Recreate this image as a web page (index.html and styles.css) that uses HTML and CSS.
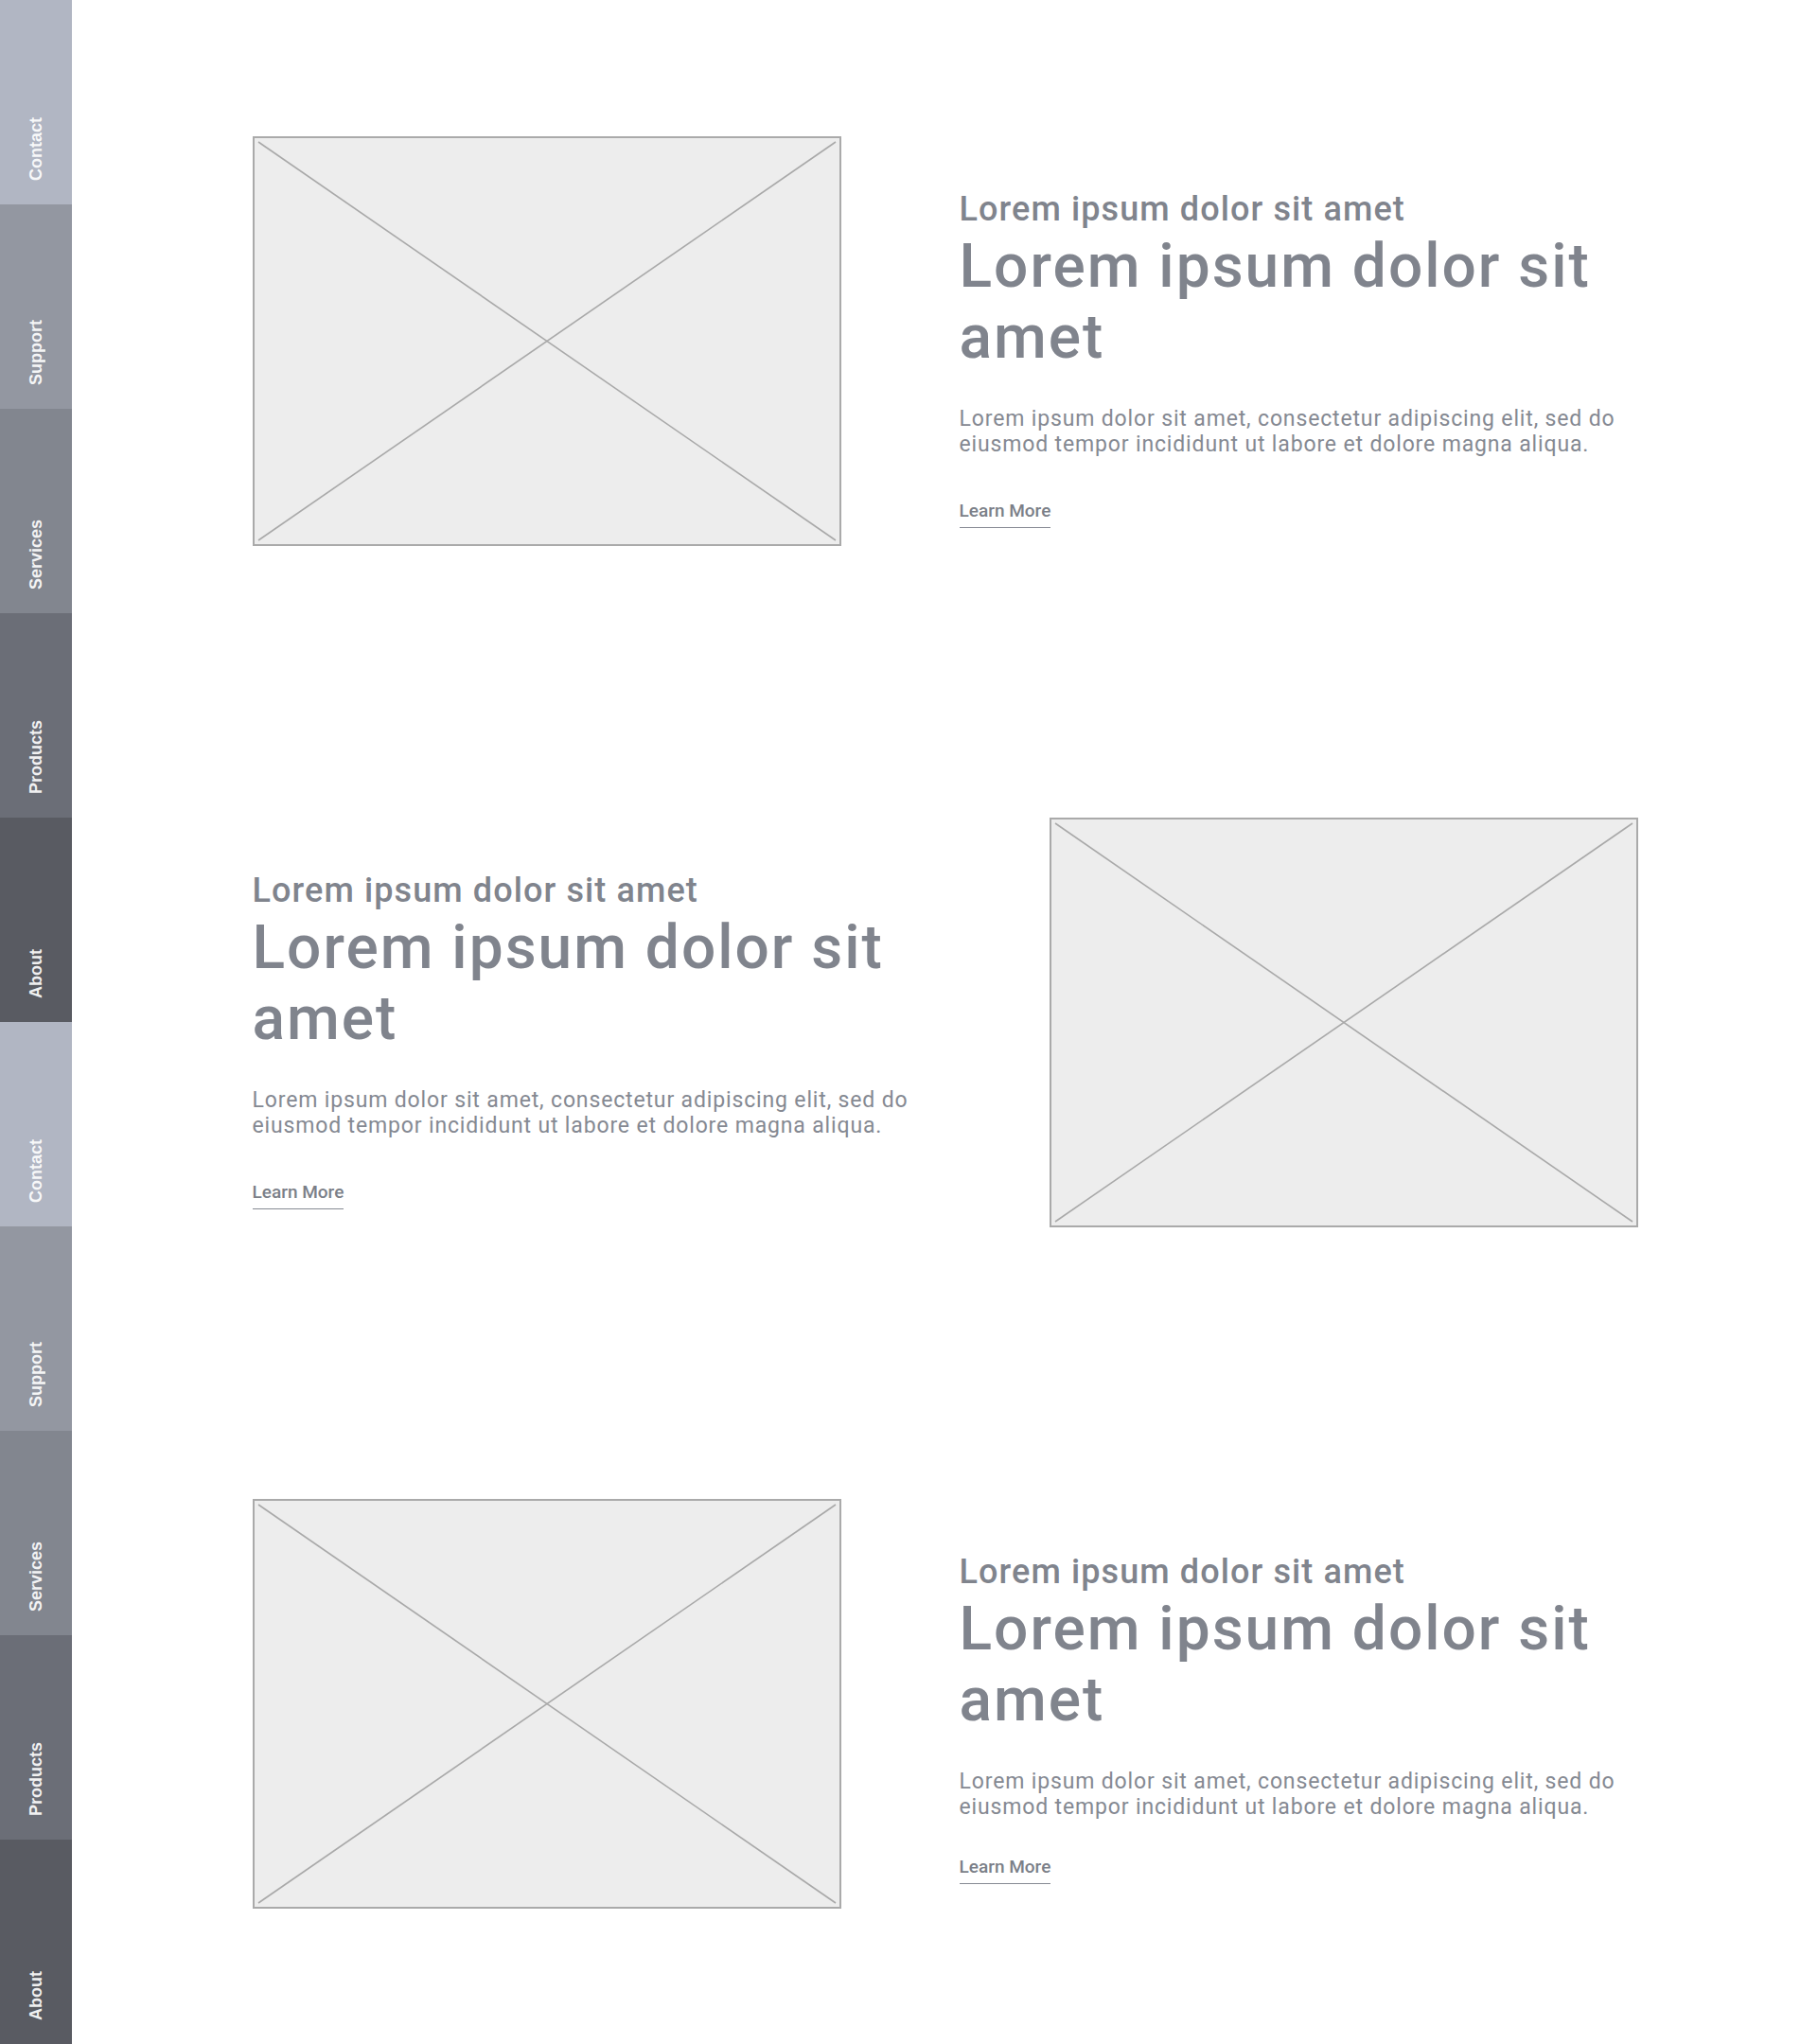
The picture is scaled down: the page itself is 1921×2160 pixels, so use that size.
FILE: index.html
```html
<!DOCTYPE html>
<html lang="en">
<head>
<meta charset="utf-8">
<title>Wireframe</title>
<link rel="stylesheet" href="styles.css">
</head>
<body>
<div class="page">
  <nav class="sidebar">
    <a class="tab tab-1"><span>Contact</span></a>
    <a class="tab tab-2"><span>Support</span></a>
    <a class="tab tab-3"><span>Services</span></a>
    <a class="tab tab-4"><span>Products</span></a>
    <a class="tab tab-5"><span>About</span></a>
    <a class="tab tab-1"><span>Contact</span></a>
    <a class="tab tab-2"><span>Support</span></a>
    <a class="tab tab-3"><span>Services</span></a>
    <a class="tab tab-4"><span>Products</span></a>
    <a class="tab tab-5"><span>About</span></a>
  </nav>
  <main class="main">
    <section class="row">
      <div class="placeholder">
        <svg viewBox="0 0 618 429" preserveAspectRatio="none"><line x1="4" y1="4" x2="614" y2="425"/><line x1="614" y1="4" x2="4" y2="425"/></svg>
      </div>
      <div class="text">
        <h3 class="eyebrow">Lorem ipsum dolor sit amet</h3>
        <h2 class="title">Lorem ipsum dolor sit amet</h2>
        <p class="body">Lorem ipsum dolor sit amet, consectetur adipiscing elit, sed do eiusmod tempor incididunt ut labore et dolore magna aliqua.</p>
        <a class="more">Learn More</a>
      </div>
    </section>
    <section class="row">
      <div class="text">
        <h3 class="eyebrow">Lorem ipsum dolor sit amet</h3>
        <h2 class="title">Lorem ipsum dolor sit amet</h2>
        <p class="body">Lorem ipsum dolor sit amet, consectetur adipiscing elit, sed do eiusmod tempor incididunt ut labore et dolore magna aliqua.</p>
        <a class="more">Learn More</a>
      </div>
      <div class="placeholder">
        <svg viewBox="0 0 618 429" preserveAspectRatio="none"><line x1="4" y1="4" x2="614" y2="425"/><line x1="614" y1="4" x2="4" y2="425"/></svg>
      </div>
    </section>
    <section class="row row-last">
      <div class="placeholder">
        <svg viewBox="0 0 618 429" preserveAspectRatio="none"><line x1="4" y1="4" x2="614" y2="425"/><line x1="614" y1="4" x2="4" y2="425"/></svg>
      </div>
      <div class="text">
        <h3 class="eyebrow">Lorem ipsum dolor sit amet</h3>
        <h2 class="title">Lorem ipsum dolor sit amet</h2>
        <p class="body">Lorem ipsum dolor sit amet, consectetur adipiscing elit, sed do eiusmod tempor incididunt ut labore et dolore magna aliqua.</p>
        <a class="more">Learn More</a>
      </div>
    </section>
  </main>
</div>
</body>
</html>
```
FILE: styles.css
```css
* { box-sizing: border-box; }
html, body { margin: 0; padding: 0; background: #ffffff; }
body { font-family: Roboto, "Liberation Sans", sans-serif; }

.page {
  display: flex;
  width: 1921px;
  min-height: 2160px;
}

.sidebar {
  width: 76px;
  flex: 0 0 76px;
  display: flex;
  flex-direction: column;
}

.tab {
  height: 216px;
  display: flex;
  flex-direction: column;
  justify-content: flex-end;
  align-items: center;
  padding-bottom: 25px;
  color: rgba(255, 255, 255, 0.92);
  font-family: "Liberation Sans", Arial, sans-serif;
  font-weight: 700;
  font-size: 18px;
  text-decoration: none;
}
.tab span {
  writing-mode: vertical-rl;
  transform: rotate(180deg);
  line-height: 20px;
}
.tab-1 { background: #b1b6c3; }
.tab-2 { background: #9397a1; }
.tab-3 { background: #82868f; }
.tab-4 { background: #6b6e77; }
.tab-5 { background: #595b62; }

.main {
  flex: 1;
  display: flex;
  flex-direction: column;
  align-items: center;
}

.row {
  width: 1464px;
  height: 720px;
  display: flex;
  align-items: center;
  gap: 125px;
}

.placeholder {
  width: 622px;
  height: 433px;
  flex: 0 0 622px;
  border: 2px solid #aaaaaa;
  background: #ededed;
}
.placeholder svg {
  display: block;
  width: 100%;
  height: 100%;
}
.placeholder line {
  stroke: #a9a9a9;
  stroke-width: 1.6;
}

.text {
  width: 717px;
  flex: 0 0 717px;
  margin-top: 36px;
  color: #80848d;
}

.eyebrow {
  margin: 0;
  font-size: 36px;
  line-height: 45px;
  font-weight: 500;
  letter-spacing: 1.1px;
}

.title {
  margin: 0;
  font-size: 64px;
  line-height: 75px;
  font-weight: 500;
  letter-spacing: 2px;
}

.body {
  margin: 35px 0 0;
  font-size: 23px;
  line-height: 27.5px;
  font-weight: 400;
  letter-spacing: 0.85px;
  color: #858992;
}

.more {
  display: inline-block;
  margin-top: 44px;
  font-size: 19px;
  line-height: 24px;
  font-weight: 500;
  padding-bottom: 5px;
  border-bottom: 1px solid #868a93;
  color: #7b7f88;
}

.row-last .text {
  margin-top: 29px;
}
.row-last .more {
  margin-top: 37px;
}
```
